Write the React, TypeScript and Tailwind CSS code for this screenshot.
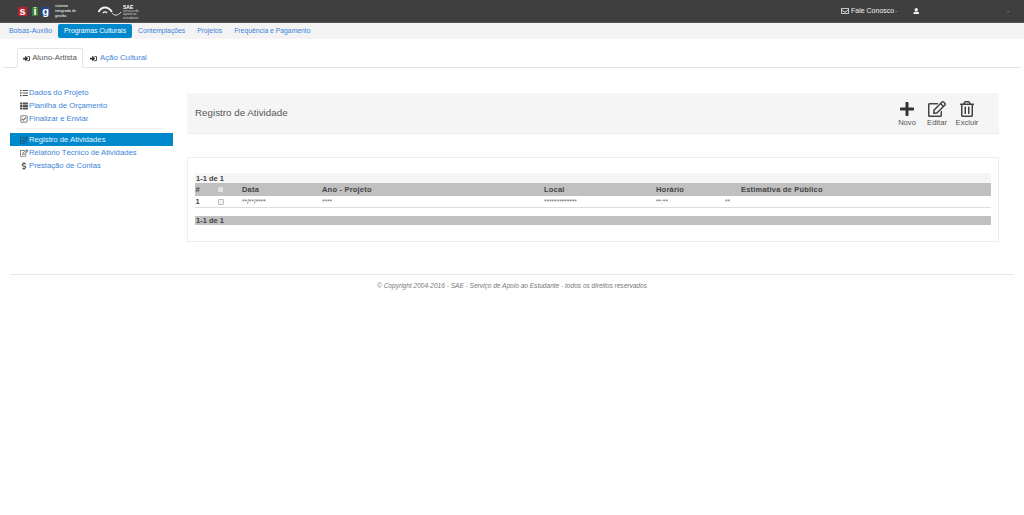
import React from 'react';
import { FaPlus, FaRegEdit, FaRegTrashAlt, FaList, FaRegEnvelope, FaUser, FaSignInAlt, FaRegCheckSquare, FaThList, FaDollarSign } from 'react-icons/fa';

const font = { fontFamily: '"Liberation Sans", Arial, sans-serif' };

const navItems = ['Bolsas-Auxílio', 'Programas Culturais', 'Contemplações', 'Projetos', 'Frequência e Pagamento'];

const SideItem: React.FC<{ icon: React.ReactNode; label: string; active?: boolean }> = ({ icon, label, active }) => (
  <div className={`flex items-center h-[13px] pl-[8px] text-[7.7px] ${active ? 'bg-[#0088cc] text-[#e8f4fb]' : 'text-[#3c83d8]'}`}>
    <span className={`w-[11px] flex justify-center ${active ? 'text-[#244a60]' : 'text-[#555]'}`}>{icon}</span>
    {label}
  </div>
);

const Tool: React.FC<{ icon: React.ReactNode; label: string }> = ({ icon, label }) => (
  <div className="flex flex-col items-center w-[30px] text-[7.6px] text-[#555]">
    <div className="h-[18px] flex items-center">{icon}</div>
    <span className="leading-[10px]">{label}</span>
  </div>
);

export default function App() {
  return (
    <div className="min-h-[515px] bg-white" style={font}>
      <header className="h-[23px] bg-[#3f3f3f] flex items-center border-b border-[#555] text-white">
        <div className="flex items-center ml-[18px] w-[820px]">
          <div className="flex items-center text-[11px] font-bold leading-none">
            <span className="w-[9px] h-[9px] bg-[#b3242c] flex items-center justify-center">s</span>
            <span className="w-[6px] h-[9px] ml-[5px] bg-[#3f7d3a] flex items-center justify-center">i</span>
            <span className="w-[9px] h-[9px] ml-[3px] bg-[#24468c] flex items-center justify-center">g</span>
          </div>
          <div className="ml-[5px] text-[3.5px] leading-[5px] font-bold text-[#ddd]">
            sistema<br />integrado de<br />gestão
          </div>
          <svg viewBox="0 0 24 12" className="w-[24px] h-[12px] ml-[22px]" fill="none" stroke="#f2f2f2">
            <path d="M0.5 7 C4 1 10 1 14 7" strokeWidth="1.8" />
            <path d="M5 8 C6 6.5 8 6.5 9 8" strokeWidth="1.4" />
            <path d="M14 8 C16 11 20 11 23 7" strokeWidth="0.9" />
          </svg>
          <div className="ml-[1px] mt-[3px] text-[3.5px] leading-[3.6px] text-[#ccc]">
            <div className="text-[5px] leading-[5px] font-bold text-white">SAE</div>
            serviço de<br />apoio ao<br />estudante
          </div>
        </div>
        <div className="flex items-center text-[7px] text-[#f0f0f0] ml-[3px]">
          <FaRegEnvelope size={8} className="mr-[2px]" />
          <span>Fale Conosco</span>
          <span className="ml-[1px] text-[#999]">-</span>
          <FaUser size={6.5} className="ml-[15px]" />
          <span className="ml-[88px] text-[#999]">-</span>
        </div>
      </header>

      <nav className="h-[16px] bg-[#f3f3f3] flex items-center pl-[3px] text-[6.8px] text-[#3c83d8]">
        {navItems.map((item, i) => (
          <span
            key={item}
            className={`h-[14px] flex items-center px-[6px] rounded-[2px] ${i === 1 ? 'bg-[#0088cc] text-white' : ''}`}
          >
            {item}
          </span>
        ))}
      </nav>

      <div className="mx-[3px] mt-[9px] flex h-[20px] border-b border-[#e4e4e4] pl-[14px] text-[7.8px]">
        <div className="h-[20px] w-[66px] flex items-center justify-center gap-[2px] border border-b-white border-[#e4e4e4] rounded-t-[2px] bg-white text-[#555]">
          <FaSignInAlt size={7} className="text-[#333]" />
          Aluno-Artista
        </div>
        <div className="h-[20px] ml-[7px] flex items-center gap-[3px] text-[#3c83d8]">
          <FaSignInAlt size={7} className="text-[#333]" />
          Ação Cultural
        </div>
      </div>

      <div className="flex pl-[10px] pr-[25px] mt-[18px]">
        <aside className="w-[163px]">
          <SideItem icon={<FaList size={8} />} label="Dados do Projeto" />
          <SideItem icon={<FaThList size={8} />} label="Planilha de Orçamento" />
          <SideItem icon={<FaRegCheckSquare size={8} />} label="Finalizar e Enviar" />
          <div className="border-t border-[#f1f1f1] mt-[3px] mb-[4px] mr-[8px] ml-[7px]" />
          <SideItem active icon={<FaRegEdit size={8} />} label="Registro de Atividades" />
          <SideItem icon={<FaRegEdit size={8} />} label="Relatório Técnico de Atividades" />
          <SideItem icon={<FaDollarSign size={8} />} label="Prestação de Contas" />
        </aside>

        <main className="ml-[14px] mt-[7px] flex-1">
          <div className="h-[41px] bg-[#f5f5f5] border-b border-[#ececec] flex items-center justify-between pl-[8px] pr-[17px] text-[#555]">
            <span className="text-[9.8px]">Registro de Atividade</span>
            <div className="flex items-center pt-[1px]">
              <Tool icon={<FaPlus size={16} className="text-[#333]" />} label="Novo" />
              <Tool icon={<FaRegEdit size={18} className="text-[#444]" />} label="Editar" />
              <Tool icon={<FaRegTrashAlt size={16} className="text-[#444]" />} label="Excluir" />
            </div>
          </div>

          <section className="mt-[23px] h-[85px] border border-[#eee] px-[7px] pt-[15px]">
            <div className="h-[10px] bg-[#f5f5f5] flex items-end text-[7.5px] leading-[9px] font-bold text-[#444] pl-[1px]">1-1 de 1</div>
            <div className="h-[13px] bg-[#c0c0c0] flex items-center text-[7.5px] font-bold text-[#444] tracking-[0.2px]">
              <span className="w-[23px] pl-[0.5px]">#</span>
              <span className="w-[24px]"><span className="block w-[5px] h-[5px] bg-[#e2e2e2] rounded-[1px]" /></span>
              <span className="w-[80px]">Data</span>
              <span className="w-[222px]">Ano - Projeto</span>
              <span className="w-[112px]">Local</span>
              <span className="w-[85px]">Horário</span>
              <span>Estimativa de Público</span>
            </div>
            <div className="h-[12px] flex items-center border-b border-[#ddd] text-[6.5px] text-[#666]">
              <span className="w-[23px] text-[7.5px] font-bold text-[#444] pl-[0.5px]">1</span>
              <span className="w-[24px]"><span className="block w-[6px] h-[6px] border border-[#bbb] rounded-[1px] bg-[#f4f4f4]" /></span>
              <span className="w-[80px]">**/**/****</span>
              <span className="w-[222px]">****</span>
              <span className="w-[112px]">*************</span>
              <span className="w-[69px]">**:**</span>
              <span>**</span>
            </div>
            <div className="mt-[8px] h-[9px] bg-[#c0c0c0] flex items-center text-[7.5px] font-bold text-[#444] pl-[1px]">1-1 de 1</div>
          </section>
        </main>
      </div>

      <footer className="mx-[10px] mt-[32px] border-t border-[#e6e6e6] pt-[6px] text-center text-[6.55px] italic text-[#777]">
        © Copyright 2004-2016 - SAE - Serviço de Apoio ao Estudante - todos os direitos reservados
      </footer>
    </div>
  );
}
